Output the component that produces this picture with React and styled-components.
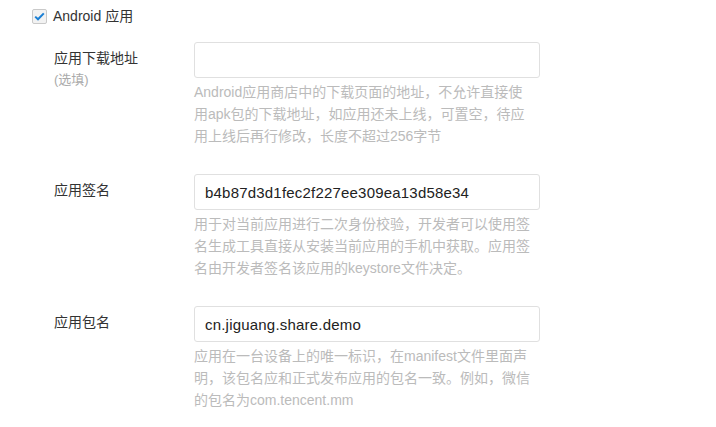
import styled, { createGlobalStyle } from "styled-components";

const GlobalStyle = createGlobalStyle`
  html, body {
    margin: 0;
    padding: 0;
    background: #fff;
  }
  body {
    font-family: "Liberation Sans", "Noto Sans CJK SC", sans-serif;
    color: #333;
  }
`;

const Page = styled.div`
  width: 716px;
  height: 427px;
  overflow: hidden;
  padding: 8px 0 0 32px;
  box-sizing: border-box;
`;

const CheckRow = styled.label`
  display: flex;
  align-items: center;
  gap: 6px;
  font-size: 14px;
  line-height: 16px;
  color: #333;
`;

const Box = styled.span`
  width: 13px;
  height: 13px;
  border: 1px solid #c9c9c9;
  border-radius: 2px;
  background: #f2f2f2;
  display: flex;
  align-items: center;
  justify-content: center;
`;

const Fields = styled.div`
  display: flex;
  flex-direction: column;
  gap: 27px;
  padding: 18px 0 0 22px;
`;

const Field = styled.div`
  display: grid;
  grid-template-columns: 140px 346px;
`;

const Label = styled.div`
  font-size: 14px;
  line-height: 22px;
  padding-top: 5px;
  color: #333;
`;

const Optional = styled.div`
  font-size: 13px;
  line-height: 22px;
  color: #aaa;
`;

const Input = styled.div`
  height: 36px;
  box-sizing: border-box;
  border: 1px solid #e0e0e0;
  border-radius: 3px;
  padding: 0 10px;
  display: flex;
  align-items: center;
  font-size: 15px;
  letter-spacing: 0.2px;
  color: #222;
`;

const Help = styled.p`
  margin: 3px 0 0;
  max-width: 340px;
  font-size: 14px;
  line-height: 22px;
  color: #bbb;
`;

const fields = [
  {
    label: "应用下载地址",
    optional: true,
    value: "",
    help: "Android应用商店中的下载页面的地址，不允许直接使用apk包的下载地址，如应用还未上线，可置空，待应用上线后再行修改，长度不超过256字节",
  },
  {
    label: "应用签名",
    value: "b4b87d3d1fec2f227ee309ea13d58e34",
    help: "用于对当前应用进行二次身份校验，开发者可以使用签名生成工具直接从安装当前应用的手机中获取。应用签名由开发者签名该应用的keystore文件决定。",
  },
  {
    label: "应用包名",
    value: "cn.jiguang.share.demo",
    help: "应用在一台设备上的唯一标识，在manifest文件里面声明，该包名应和正式发布应用的包名一致。例如，微信的包名为com.tencent.mm",
  },
];

export default function App() {
  return (
    <Page>
      <GlobalStyle />
      <CheckRow>
        <Box>
          <svg width="11" height="9" viewBox="0 0 11 9">
            <path d="M1.2 4.6 L4 7.3 L9.8 1.4" fill="none" stroke="#1a7fd4" strokeWidth="2" />
          </svg>
        </Box>
        Android 应用
      </CheckRow>
      <Fields>
        {fields.map((f) => (
          <Field key={f.label}>
            <div>
              <Label>{f.label}</Label>
              {f.optional && <Optional>(选填)</Optional>}
            </div>
            <div>
              <Input>{f.value}</Input>
              <Help>{f.help}</Help>
            </div>
          </Field>
        ))}
      </Fields>
    </Page>
  );
}
